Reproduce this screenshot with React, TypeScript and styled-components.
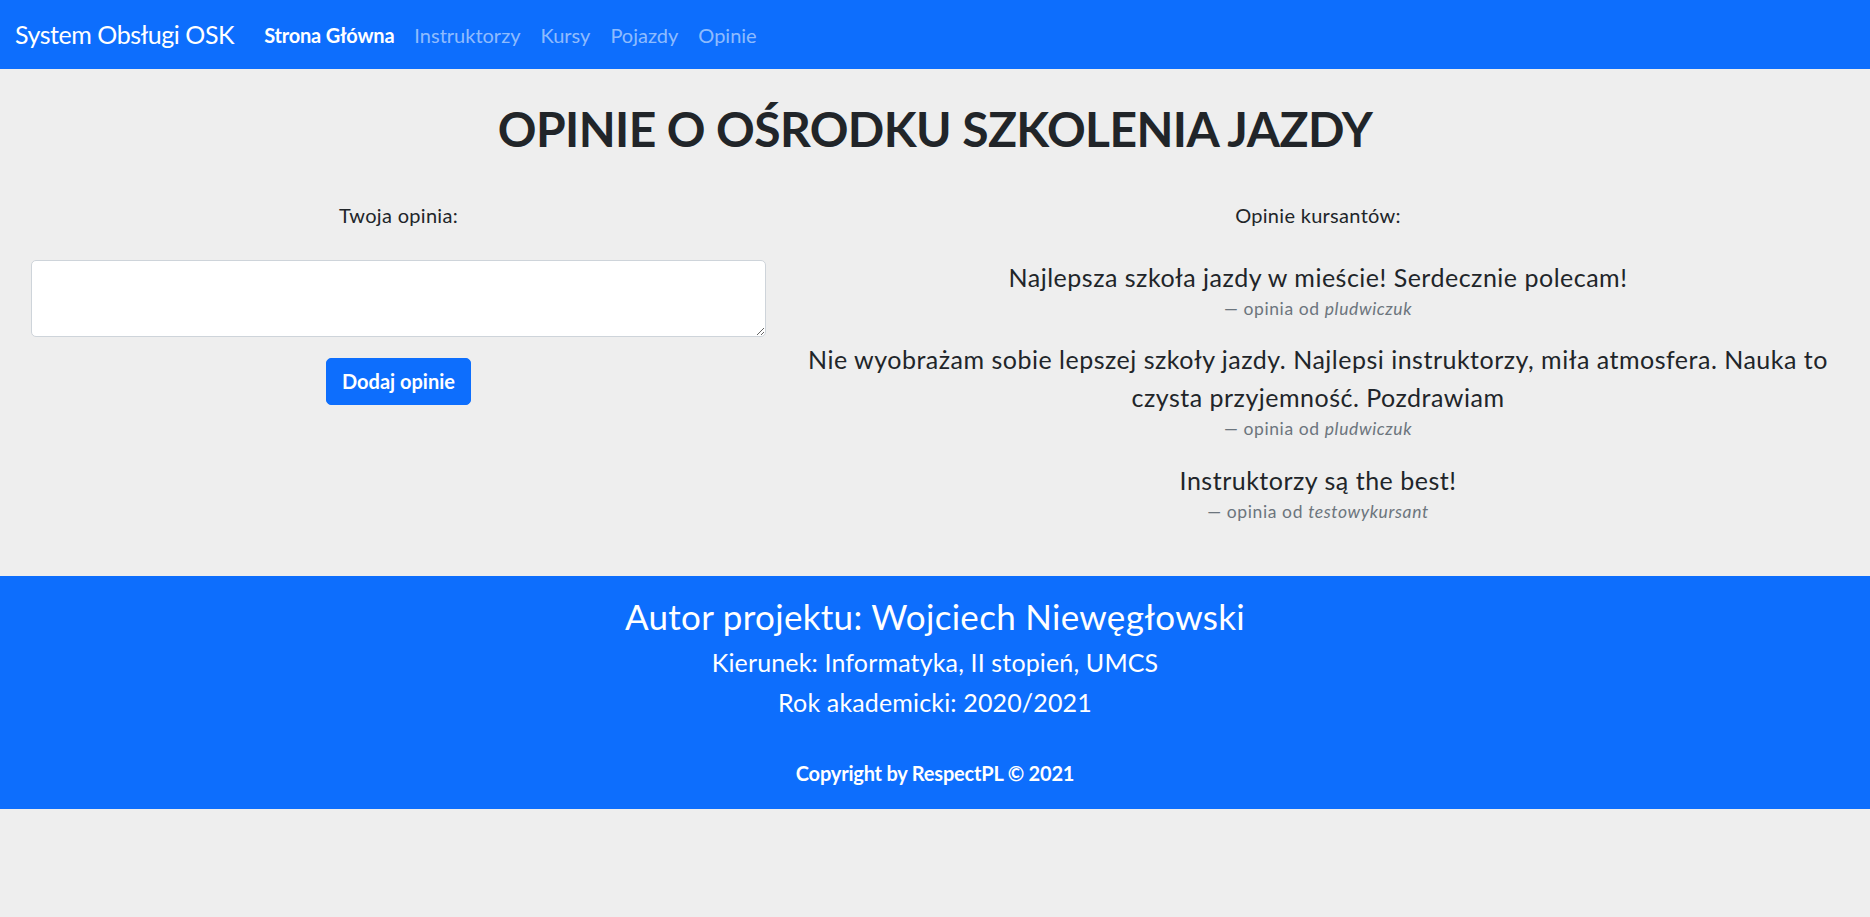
import React from "react";
import styled, { createGlobalStyle } from "styled-components";

const GlobalStyle = createGlobalStyle`
  html, body {
    margin: 0;
    padding: 0;
    background: #eeeeee;
  }
  body {
    font-family: Lato, "Liberation Sans", sans-serif;
    font-size: 20px;
    line-height: 1.5;
    color: #212529;
  }
  * { box-sizing: border-box; }
`;

const Navbar = styled.nav`
  height: 69px;
  display: flex;
  align-items: center;
  padding: 0 15px;
  background: #0d6efd;
`;

const Brand = styled.a`
  font-size: 25px;
  line-height: 1.5;
  letter-spacing: -0.45px;
  color: #ffffff;
  margin-right: 20px;
  text-decoration: none;
`;

const NavList = styled.ul`
  display: flex;
  list-style: none;
  margin: 0;
  padding: 0;
`;

const NavLink = styled.a<{ $active?: boolean }>`
  display: block;
  padding: 0 10px;
  font-size: 20px;
  line-height: 1.5;
  text-decoration: none;
  color: ${(p) => (p.$active ? "#ffffff" : "rgba(255,255,255,0.55)")};
  font-weight: ${(p) => (p.$active ? 700 : 400)};
  letter-spacing: ${(p) => (p.$active ? "-0.2px" : "0px")};
`;

const Main = styled.main`
  padding-bottom: 32px;
`;

const Title = styled.h1`
  margin: 31px 0 42px;
  font-size: 48px;
  line-height: 1.2;
  font-weight: 700;
  letter-spacing: -0.6px;
  text-align: center;
`;

const Columns = styled.div`
  display: grid;
  grid-template-columns: 735px 1fr;
  column-gap: 22px;
  padding: 0 22px 0 31px;
`;

const Column = styled.section`
  display: flex;
  flex-direction: column;
  align-items: center;
  text-align: center;
`;

const Label = styled.p<{ $gap: number }>`
  margin: 0 0 ${(p) => p.$gap}px;
  font-size: 20px;
  line-height: 1.5;
  letter-spacing: 0.3px;
`;

const TextArea = styled.textarea`
  display: block;
  width: 100%;
  height: 77px;
  margin: 0 0 20.5px;
  padding: 7.5px 15px;
  border: 1px solid #ced4da;
  border-radius: 5px;
  background: #ffffff;
  font: inherit;
  resize: vertical;
`;

const Button = styled.button`
  height: 47px;
  padding: 0 15px;
  border: 1px solid #0d6efd;
  border-radius: 5px;
  background: #0d6efd;
  color: #ffffff;
  font-family: inherit;
  font-size: 20px;
  font-weight: 700;
  cursor: pointer;
`;

const Figure = styled.figure`
  margin: 0 0 19px;
  width: 100%;
`;

const Quote = styled.blockquote`
  margin: 0;
  font-size: 25px;
  line-height: 1.5;
  letter-spacing: 0.5px;
`;

const Caption = styled.figcaption`
  font-size: 17.5px;
  line-height: 1.5;
  letter-spacing: 0.6px;
  color: #6c757d;
  &::before {
    content: "—\\00A0";
  }
`;

const Footer = styled.footer`
  background: #0d6efd;
  color: #ffffff;
  text-align: center;
  padding: 19px 0 20.5px;
`;

const Author = styled.h3`
  margin: 0 0 9.5px;
  font-size: 35px;
  line-height: 1.2;
  font-weight: 400;
  letter-spacing: 0.3px;
`;

const Info = styled.h5`
  margin: 0 0 10px;
  font-size: 25px;
  line-height: 1.2;
  font-weight: 400;
  letter-spacing: 0.15px;
`;

const Copyright = styled.p`
  margin: 41.5px 0 0;
  font-size: 20px;
  line-height: 1.5;
  font-weight: 700;
  letter-spacing: -0.2px;
`;

const opinions = [
  {
    text: "Najlepsza szkoła jazdy w mieście! Serdecznie polecam!",
    author: "pludwiczuk",
  },
  {
    text: "Nie wyobrażam sobie lepszej szkoły jazdy. Najlepsi instruktorzy, miła atmosfera. Nauka to czysta przyjemność. Pozdrawiam",
    author: "pludwiczuk",
  },
  { text: "Instruktorzy są the best!", author: "testowykursant" },
];

export default function App() {
  return (
    <>
      <GlobalStyle />
      <Navbar>
        <Brand href="#">System Obsługi OSK</Brand>
        <NavList>
          <li><NavLink href="#" $active>Strona Główna</NavLink></li>
          <li><NavLink href="#">Instruktorzy</NavLink></li>
          <li><NavLink href="#">Kursy</NavLink></li>
          <li><NavLink href="#">Pojazdy</NavLink></li>
          <li><NavLink href="#">Opinie</NavLink></li>
        </NavList>
      </Navbar>
      <Main>
        <Title>OPINIE O OŚRODKU SZKOLENIA JAZDY</Title>
        <Columns>
          <Column>
            <Label $gap={30.5}>Twoja opinia:</Label>
            <TextArea />
            <Button type="button">Dodaj opinie</Button>
          </Column>
          <Column>
            <Label $gap={29}>Opinie kursantów:</Label>
            {opinions.map((o, i) => (
              <Figure key={i}>
                <Quote>{o.text}</Quote>
                <Caption>
                  opinia od <cite>{o.author}</cite>
                </Caption>
              </Figure>
            ))}
          </Column>
        </Columns>
      </Main>
      <Footer>
        <Author>Autor projektu: Wojciech Niewęgłowski</Author>
        <Info>Kierunek: Informatyka, II stopień, UMCS</Info>
        <Info>Rok akademicki: 2020/2021</Info>
        <Copyright>Copyright by RespectPL © 2021</Copyright>
      </Footer>
    </>
  );
}
